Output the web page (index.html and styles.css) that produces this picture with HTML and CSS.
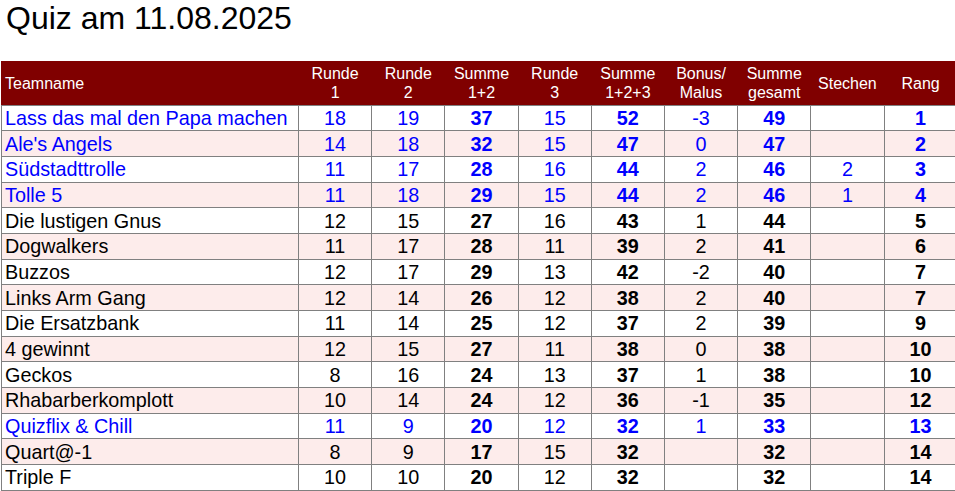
FILE: index.html
```html
<!DOCTYPE html>
<html lang="de">
<head>
<meta charset="utf-8">
<title>Quiz am 11.08.2025</title>
<link rel="stylesheet" href="styles.css">
</head>
<body>
<h1 class="title">Quiz am 11.08.2025</h1>
<table class="quiz">
<colgroup>
<col class="c-name"><col class="c-num"><col class="c-num"><col class="c-num"><col class="c-num"><col class="c-num"><col class="c-num"><col class="c-num"><col class="c-num"><col class="c-num">
</colgroup>
<thead>
<tr>
<th class="name">Teamname</th>
<th>Runde<br>1</th>
<th>Runde<br>2</th>
<th>Summe<br>1+2</th>
<th>Runde<br>3</th>
<th>Summe<br>1+2+3</th>
<th>Bonus/<br>Malus</th>
<th>Summe<br>gesamt</th>
<th>Stechen</th>
<th>Rang</th>
</tr>
</thead>
<tbody>
<tr class="blue"><td class="name">Lass das mal den Papa machen</td><td>18</td><td>19</td><td class="b">37</td><td>15</td><td class="b">52</td><td>-3</td><td class="b">49</td><td></td><td class="b">1</td></tr>
<tr class="blue alt"><td class="name">Ale's Angels</td><td>14</td><td>18</td><td class="b">32</td><td>15</td><td class="b">47</td><td>0</td><td class="b">47</td><td></td><td class="b">2</td></tr>
<tr class="blue"><td class="name">Südstadttrolle</td><td>11</td><td>17</td><td class="b">28</td><td>16</td><td class="b">44</td><td>2</td><td class="b">46</td><td>2</td><td class="b">3</td></tr>
<tr class="blue alt"><td class="name">Tolle 5</td><td>11</td><td>18</td><td class="b">29</td><td>15</td><td class="b">44</td><td>2</td><td class="b">46</td><td>1</td><td class="b">4</td></tr>
<tr><td class="name">Die lustigen Gnus</td><td>12</td><td>15</td><td class="b">27</td><td>16</td><td class="b">43</td><td>1</td><td class="b">44</td><td></td><td class="b">5</td></tr>
<tr class="alt"><td class="name">Dogwalkers</td><td>11</td><td>17</td><td class="b">28</td><td>11</td><td class="b">39</td><td>2</td><td class="b">41</td><td></td><td class="b">6</td></tr>
<tr><td class="name">Buzzos</td><td>12</td><td>17</td><td class="b">29</td><td>13</td><td class="b">42</td><td>-2</td><td class="b">40</td><td></td><td class="b">7</td></tr>
<tr class="alt"><td class="name">Links Arm Gang</td><td>12</td><td>14</td><td class="b">26</td><td>12</td><td class="b">38</td><td>2</td><td class="b">40</td><td></td><td class="b">7</td></tr>
<tr><td class="name">Die Ersatzbank</td><td>11</td><td>14</td><td class="b">25</td><td>12</td><td class="b">37</td><td>2</td><td class="b">39</td><td></td><td class="b">9</td></tr>
<tr class="alt"><td class="name">4 gewinnt</td><td>12</td><td>15</td><td class="b">27</td><td>11</td><td class="b">38</td><td>0</td><td class="b">38</td><td></td><td class="b">10</td></tr>
<tr><td class="name">Geckos</td><td>8</td><td>16</td><td class="b">24</td><td>13</td><td class="b">37</td><td>1</td><td class="b">38</td><td></td><td class="b">10</td></tr>
<tr class="alt"><td class="name">Rhabarberkomplott</td><td>10</td><td>14</td><td class="b">24</td><td>12</td><td class="b">36</td><td>-1</td><td class="b">35</td><td></td><td class="b">12</td></tr>
<tr class="blue"><td class="name">Quizflix &amp; Chill</td><td>11</td><td>9</td><td class="b">20</td><td>12</td><td class="b">32</td><td>1</td><td class="b">33</td><td></td><td class="b">13</td></tr>
<tr class="alt"><td class="name">Quart@-1</td><td>8</td><td>9</td><td class="b">17</td><td>15</td><td class="b">32</td><td></td><td class="b">32</td><td></td><td class="b">14</td></tr>
<tr><td class="name">Triple F</td><td>10</td><td>10</td><td class="b">20</td><td>12</td><td class="b">32</td><td></td><td class="b">32</td><td></td><td class="b">14</td></tr>
</tbody>
</table>
</body>
</html>
```
FILE: styles.css
```css
html, body {
  margin: 0;
  padding: 0;
  overflow: hidden;
  background: #ffffff;
}
body {
  font-family: "Liberation Sans", Arial, sans-serif;
  color: #000000;
}
.title {
  margin: 0 0 25px 0;
  padding-left: 6px;
  font-size: 32px;
  font-weight: normal;
  line-height: 36px;
}
.quiz {
  margin-left: 1px;
  border-collapse: collapse;
  table-layout: fixed;
  width: 956px;
}
.c-name { width: 297px; }
.c-num { width: 73.2px; }
.quiz th {
  background: #800000;
  color: #ffffff;
  font-weight: normal;
  font-size: 16px;
  line-height: 19px;
  height: 42.5px;
  padding: 0;
  text-align: center;
  vertical-align: middle;
  border: 1px solid #800000;
  border-bottom-color: #808080;
}
.quiz th.name {
  text-align: left;
  padding-left: 3px;
}
.quiz td {
  border: 1px solid #808080;
  font-size: 19.8px;
  height: 24.7px;
  padding: 0;
  text-align: center;
  vertical-align: middle;
  line-height: 22px;
  white-space: nowrap;
}
.quiz td.name {
  text-align: left;
  padding-left: 3px;
}
.quiz td.b { font-weight: bold; }
.quiz tr.alt td { background: #fdeceb; }
.quiz tr.blue td { color: #0000ff; }
```
